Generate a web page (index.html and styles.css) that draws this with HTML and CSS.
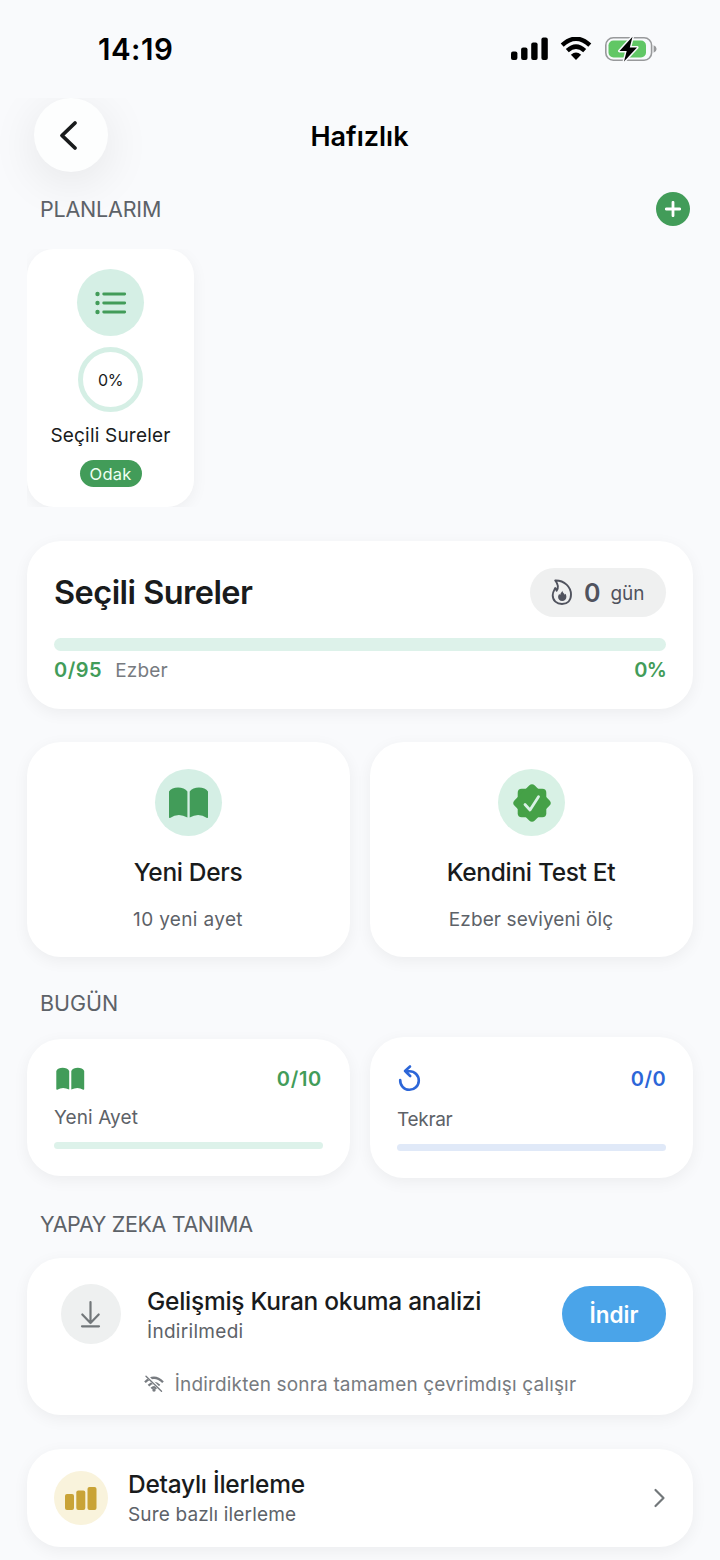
FILE: index.html
```html
<!DOCTYPE html>
<html lang="tr">
<head>
<meta charset="utf-8">
<title>Hafızlık</title>
<link rel="stylesheet" href="styles.css">
</head>
<body>
<div class="screen">
  <div class="status">
    <span class="time">14:19</span>
    <div class="status-icons">
      <svg width="37" height="24" viewBox="0 0 37 24"><rect x="0" y="14.5" width="6.4" height="8.5" rx="2"/><rect x="10.1" y="10.5" width="6.4" height="12.5" rx="2"/><rect x="20.2" y="5.5" width="6.4" height="17.500" rx="2"/><rect x="30.400" y="0.400" width="6.400" height="22.600" rx="2"/></svg>
      <svg class="wifi" width="32" height="24" viewBox="0 0 32 24"><path d="M2.200 8.200Q16-4.600 29.800 8.200" fill="none" stroke="#000" stroke-width="4.400"/><path d="M7.300 13.600Q16 5.600 24.700 13.600" fill="none" stroke="#000" stroke-width="4.400"/><path d="M10.900 17.800Q16 13.300 21.100 17.800L16 23Z"/></svg>
      <svg class="battery" width="52" height="26" viewBox="0 0 52 26"><rect x=".8" y="1.800" width="45.800" height="22.400" rx="7.500" fill="none" stroke="#98999b" stroke-width="1.600"/><rect x="3.500" y="4.500" width="37.500" height="17" rx="5" fill="#61c765"/><path d="M48.600 9.300q3 1.200 3 3.700t-3 3.700z" fill="#98999b"/><path d="M27.500.800L14.500 15h7.200L19 25.500 32 11.400h-7.200z" stroke="#f9fafc" stroke-width="3" stroke-linejoin="round"/><path d="M27.500.800L14.500 15h7.200L19 25.500 32 11.400h-7.200z"/></svg>
    </div>
  </div>

  <header class="header">
    <button class="back" aria-label="Geri"><svg width="20" height="32" viewBox="0 0 20 32"><path d="M16 4L3 16.500l13 12.500" fill="none" stroke="#191b1c" stroke-width="3.800" stroke-linecap="round" stroke-linejoin="round"/></svg></button>
    <h1 class="title">Hafızlık</h1>
  </header>

  <div class="section-head first">
    <span class="section-label plans">PLANLARIM</span>
    <button class="add" aria-label="Ekle"><svg width="16" height="16" viewBox="0 0 16 16"><path d="M8 1.300v13.400M1.300 8h13.400" stroke="#fff" stroke-width="2.800" stroke-linecap="round"/></svg></button>
  </div>

  <div class="plan-strip">
    <div class="plan">
      <div class="disc"><svg width="34" height="26" viewBox="0 0 34 26"><g fill="#429c59"><circle cx="3.500" cy="4" r="2.200"/><circle cx="3.500" cy="13" r="2.200"/><circle cx="3.500" cy="22" r="2.200"/></g><path d="M9.700 4h21M9.700 13h21M9.700 22h21" stroke="#429c59" stroke-width="2.800" stroke-linecap="round"/></svg></div>
      <div class="ring">0%</div>
      <div class="plan-name">Seçili Sureler</div>
      <div class="focus">Odak</div>
    </div>
  </div>

  <section class="card summary">
    <div class="summary-top">
      <h2 class="summary-title">Seçili Sureler</h2>
      <div class="streak">
        <svg width="22" height="28" viewBox="0 0 22 28"><path d="M4.200 1.500C13.500 1.200 20 8.200 20 15.500c0 6-3.700 9.500-9 9.500s-9.300-3.300-9.300-8.800c0-3.200 1.500-5 2.600-7.200.7 1.100 1 1.800 1.300 2.800C7.800 8.300 6.700 4.500 4.200 1.500Z" fill="none" stroke="#50535e" stroke-width="1.900" stroke-linejoin="round"/><path d="M11.300 11.800c.2 2 2 2.500 2.400 3.900l1-.9c.3 1 .7 1.900.7 3 0 2.500-1.700 4.200-4.200 4.200s-4.100-1.700-4.100-4c0-1.200.5-2 1-3l1.100 1c.2-1.700 1.400-2.500 2.100-4.200Z" fill="#50535e"/></svg>
        <span class="streak-count">0</span><span class="streak-unit">gün</span>
      </div>
    </div>
    <div class="bar bar-lg"></div>
    <div class="summary-bottom">
      <span class="num mem">0/95</span><span class="mem-label">Ezber</span><span class="num pct">0%</span>
    </div>
  </section>

  <div class="grid actions">
    <section class="card action">
      <div class="disc"><svg width="42" height="34" viewBox="0 0 42 34"><path fill="#429c59" d="M1 5.500C4 0 16 0 19.400 5.500v26Q10.500 26.200 2 31.900q-1 .300-1-.700ZM21.700 5.500C25 0 37 0 40 5.500v25.700q0 1-1 .700Q30.500 26.200 21.700 31.500Z"/></svg></div>
      <h3 class="action-title lesson">Yeni Ders</h3>
      <p class="action-sub ayet">10 yeni ayet</p>
    </section>
    <section class="card action">
      <div class="disc mint"><svg width="40" height="40" viewBox="0 0 40 40"><g fill="#45a147"><rect x="5.700" y="5.700" width="28.600" height="28.600" rx="4"/><rect x="5.700" y="5.700" width="28.600" height="28.600" rx="4" transform="rotate(45 20 20)"/></g><path d="M13 21.500l5 5.500 8.500-13.200" fill="none" stroke="#d8f1e5" stroke-width="2.800" stroke-linecap="round" stroke-linejoin="round"/></svg></div>
      <h3 class="action-title test">Kendini Test Et</h3>
      <p class="action-sub level">Ezber seviyeni ölç</p>
    </section>
  </div>

  <div class="section-head today"><span class="section-label today-label">BUGÜN</span></div>

  <div class="grid stats">
    <section class="card stat">
      <div class="stat-top"><svg width="32" height="28" viewBox="0 0 32 28"><path fill="#429c59" d="M2.300 7C4 2.700 13.300 2.700 15.200 7v18.500Q8.700 22.300 3.300 25.700q-1 .200-1-.600ZM17.300 7C19.200 2.700 28.500 2.700 30.200 7v18.100q0 .800-1 .600Q23.800 22.300 17.300 25.500Z"/></svg><span class="num stat-ten">0/10</span></div>
      <div class="stat-name new">Yeni Ayet</div>
      <div class="bar bar-sm"></div>
    </section>
    <section class="card stat repeat">
      <div class="stat-top"><svg width="28" height="32" viewBox="0 0 28 32"><path d="M3.200 18A9.300 9.300 0 1 0 12.500 9.200H8.300M13 4.500L8 9l5.200 5" fill="none" stroke="#2c66d8" stroke-width="2.600" stroke-linecap="round" stroke-linejoin="round"/></svg><span class="num blue stat-zero">0/0</span></div>
      <div class="stat-name again">Tekrar</div>
      <div class="bar bar-sm bar-blue"></div>
    </section>
  </div>

  <div class="section-head ai"><span class="section-label ai-label">YAPAY ZEKA TANIMA</span></div>

  <section class="card model">
    <div class="model-top">
      <div class="disc-gray"><svg width="22" height="30" viewBox="0 0 22 30"><path d="M10.500 3v21M2.300 15.500L10.500 24l8.200-8.500M2 27.300h17" fill="none" stroke="#72777a" stroke-width="2.200" stroke-linecap="round" stroke-linejoin="round"/></svg></div>
      <div class="model-text">
        <h3 class="model-title">Gelişmiş Kuran okuma analizi</h3>
        <p class="model-state">İndirilmedi</p>
      </div>
      <button class="download">İndir</button>
    </div>
    <div class="offline">
      <svg width="20" height="18" viewBox="0 0 20 18"><g fill="none" stroke="#777b80" stroke-width="2.300"><path d="M1 7.300Q10-1.700 19 7.300"/><path d="M4.500 10.600Q10 5.200 15.500 10.600"/><path d="M7.300 13.500Q10 11 12.700 13.500"/></g><circle cx="10" cy="15" r="1.700" fill="#777b80"/><path d="M3 1.300l15 15" stroke="#fff" stroke-width="3"/><path d="M2 1.300l15.500 15" stroke="#777b80" stroke-width="1.400" stroke-linecap="round"/></svg>
      <span class="offline-text">İndirdikten sonra tamamen çevrimdışı çalışır</span>
    </div>
  </section>

  <section class="card detail">
    <div class="disc-gold"><svg width="32" height="26" viewBox="0 0 32 26" fill="#c9a336"><rect x="0" y="9" width="9" height="16" rx="2"/><rect x="11.300" y="5.500" width="9" height="19.500" rx="2"/><rect x="22.500" y="2" width="9" height="23" rx="2"/></svg></div>
    <div class="detail-text">
      <h3 class="detail-title">Detaylı İlerleme</h3>
      <p class="detail-sub">Sure bazlı ilerleme</p>
    </div>
    <svg width="14" height="22" viewBox="0 0 14 22"><path d="M3.500 3l8 8-8 8" fill="none" stroke="#72777a" stroke-width="2.200" stroke-linecap="round" stroke-linejoin="round"/></svg>
  </section>
</div>
</body>
</html>
```
FILE: styles.css
```css
* { box-sizing: border-box; }
body { margin: 0; background: #f9fafc; font-family: Inter, "Noto Sans", sans-serif; color: #191b1c; }
h1, h2, h3, p { margin: 0; font-weight: 500; }
button { border: 0; padding: 0; font: inherit; display: grid; place-items: center; }
svg { display: block; flex: none; }
span, h1, h2, h3, p { white-space: nowrap; }
.screen { width: 720px; height: 1560px; overflow: hidden; display: flex; flex-direction: column; }

.status { height: 98px; flex: none; padding: 36px 63px 0 98px; display: flex; justify-content: space-between; align-items: flex-start; color: #000; }
.time { font-size: 29.500px; line-height: 27px; font-weight: 600; letter-spacing: .5px; }
.status-icons { display: flex; align-items: center; height: 25px; }
.wifi { margin-left: 12px; }
.battery { margin-left: 13px; }

.header { height: 94px; flex: none; padding-left: 33.500px; display: grid; grid-template-columns: 74px 504px; align-items: start; clip-path: inset(0 0 -60px 0); }
.back { width: 74px; height: 74px; border-radius: 50%; background: #fdfefe; box-shadow: 0 10px 48px rgba(0,0,0,.085); padding-right: 4px; }
.title { text-align: center; color: #000; font-size: 27px; line-height: 78px; font-weight: 600; }

.section-head { flex: none; padding: 0 30px 0 40px; display: flex; align-items: center; justify-content: space-between; }
.first { height: 34px; position: relative; }
.section-label { font-size: 21.500px; line-height: 28px; color: #5d6268; }
.plans { letter-spacing: -.2px; }
.ai-label { letter-spacing: -.36px; }
.add { width: 34px; height: 34px; border-radius: 50%; background: #429c59; }

.plan-strip { flex: none; margin: 23px 0 34px 27px; height: 258px; overflow: hidden; }
.plan { width: 167px; height: 258px; border-radius: 27px; background: #fff; box-shadow: 0 4px 16px rgba(0,0,0,.05); padding-top: 20px; display: flex; flex-direction: column; align-items: center; }
.disc { width: 67px; height: 67px; border-radius: 50%; background: #d5efe5; display: grid; place-items: center; }
.mint { background: #d8f1e5; }
.ring { margin-top: 11px; width: 65px; height: 65px; border: 5px solid #d5efe5; border-radius: 50%; text-align: center; font-size: 16px; line-height: 56px; letter-spacing: -.3px; }
.plan-name { margin-top: 11px; font-size: 19px; line-height: 26px; letter-spacing: .2px; white-space: nowrap; }
.focus { margin-top: 11px; width: 62px; height: 27px; border-radius: 14px; background: #429c59; color: #effff3; text-align: center; font-size: 16.500px; line-height: 28px; letter-spacing: .2px; }

.card { background: #fff; border-radius: 34px; box-shadow: 0 4px 16px rgba(0,0,0,.055); }
.summary { flex: none; height: 168px; margin: 0 27px; padding: 27px 27px 0; }
.summary-top { display: flex; justify-content: space-between; height: 49px; }
.summary-title { font-size: 32.500px; line-height: 49px; font-weight: 600; letter-spacing: -.55px; }
.streak { width: 136px; height: 49px; border-radius: 25px; background: #eff0f0; display: flex; align-items: center; padding-left: 21px; color: #50535e; }
.streak-count { margin-left: 11px; font-size: 25px; font-weight: 600; }
.streak-unit { margin-left: 10px; font-size: 19px; padding-top: 1px; letter-spacing: -.1px; }
.bar { background: #ddf2ea; }
.bar-lg { height: 13px; border-radius: 7px; margin-top: 21px; }
.summary-bottom { display: flex; align-items: center; height: 38px; }
.num { color: #429c59; font-size: 20px; font-weight: 600; }
.mem { letter-spacing: .5px; }
.mem-label { margin-left: 13px; color: #777b80; font-size: 19px; letter-spacing: .2px; }
.pct { margin-left: auto; letter-spacing: -.8px; }

.grid { flex: none; display: grid; grid-template-columns: 323px 323px; gap: 20px; margin: 0 27px; align-items: center; }
.actions { margin-top: 33px; }
.action { height: 215px; padding-top: 27px; display: flex; flex-direction: column; align-items: center; }
.action-title { margin-top: 19px; font-size: 24.500px; line-height: 34px; letter-spacing: -.33px; padding-right: 1px; }
.action-sub { margin-top: 18px; font-size: 19px; line-height: 26px; font-weight: 400; color: #5d6268; padding-right: 1px; }
.ayet { letter-spacing: .35px; }
.level { letter-spacing: .1px; }
.today { height: 80px; padding-top: 12px; }
.stat { height: 137px; padding: 23px 27px 0; }
.repeat { height: 141px; padding-top: 25px; }
.stat-top { display: flex; justify-content: space-between; align-items: center; height: 32px; }
.stat-ten { letter-spacing: .7px; padding: 1px 1px 0 0; }
.stat-zero { letter-spacing: .4px; padding-top: 1px; }
.stat-name { color: #5d6268; font-size: 19px; line-height: 26px; margin-top: 11px; letter-spacing: .1px; }
.again { margin-top: 13px; letter-spacing: -.3px; }
.bar-sm { height: 7px; border-radius: 4px; margin-top: 11px; }
.bar-blue { background: #e0e9f8; }
.num.blue { color: #2c66d8; }
.ai { height: 80px; padding-top: 12px; }

.model { flex: none; height: 157px; margin: 0 27px; padding: 26px 27px 0; }
.model-top { display: flex; align-items: center; padding-left: 7px; height: 60px; }
.disc-gray { width: 60px; height: 60px; border-radius: 50%; background: #eef0f0; display: grid; place-items: center; }
.model-text { margin-left: 26px; padding-top: 3px; }
.model-title, .detail-title { font-size: 24.500px; line-height: 32px; letter-spacing: -.26px; }
.model-state, .detail-sub { font-size: 19px; line-height: 29px; font-weight: 400; letter-spacing: .3px; color: #5d6268; }
.detail-sub { letter-spacing: .15px; }
.download { margin-left: auto; width: 104px; height: 56px; border-radius: 28px; background: #4aa4e9; color: #fff; font-size: 22.500px; font-weight: 600; }
.offline { display: flex; align-items: center; justify-content: center; gap: 11px; height: 28px; margin-top: 26px; color: #777b80; }
.offline-text { font-size: 19px; letter-spacing: .17px; }

.detail { flex: none; height: 98px; margin: 34px 27px 0; padding: 0 27px; display: flex; align-items: center; }
.disc-gold { width: 54px; height: 54px; border-radius: 50%; background: #f9f3dc; display: grid; place-items: center; }
.detail-text { margin-left: 20px; margin-right: auto; padding-top: 1px; }
```
